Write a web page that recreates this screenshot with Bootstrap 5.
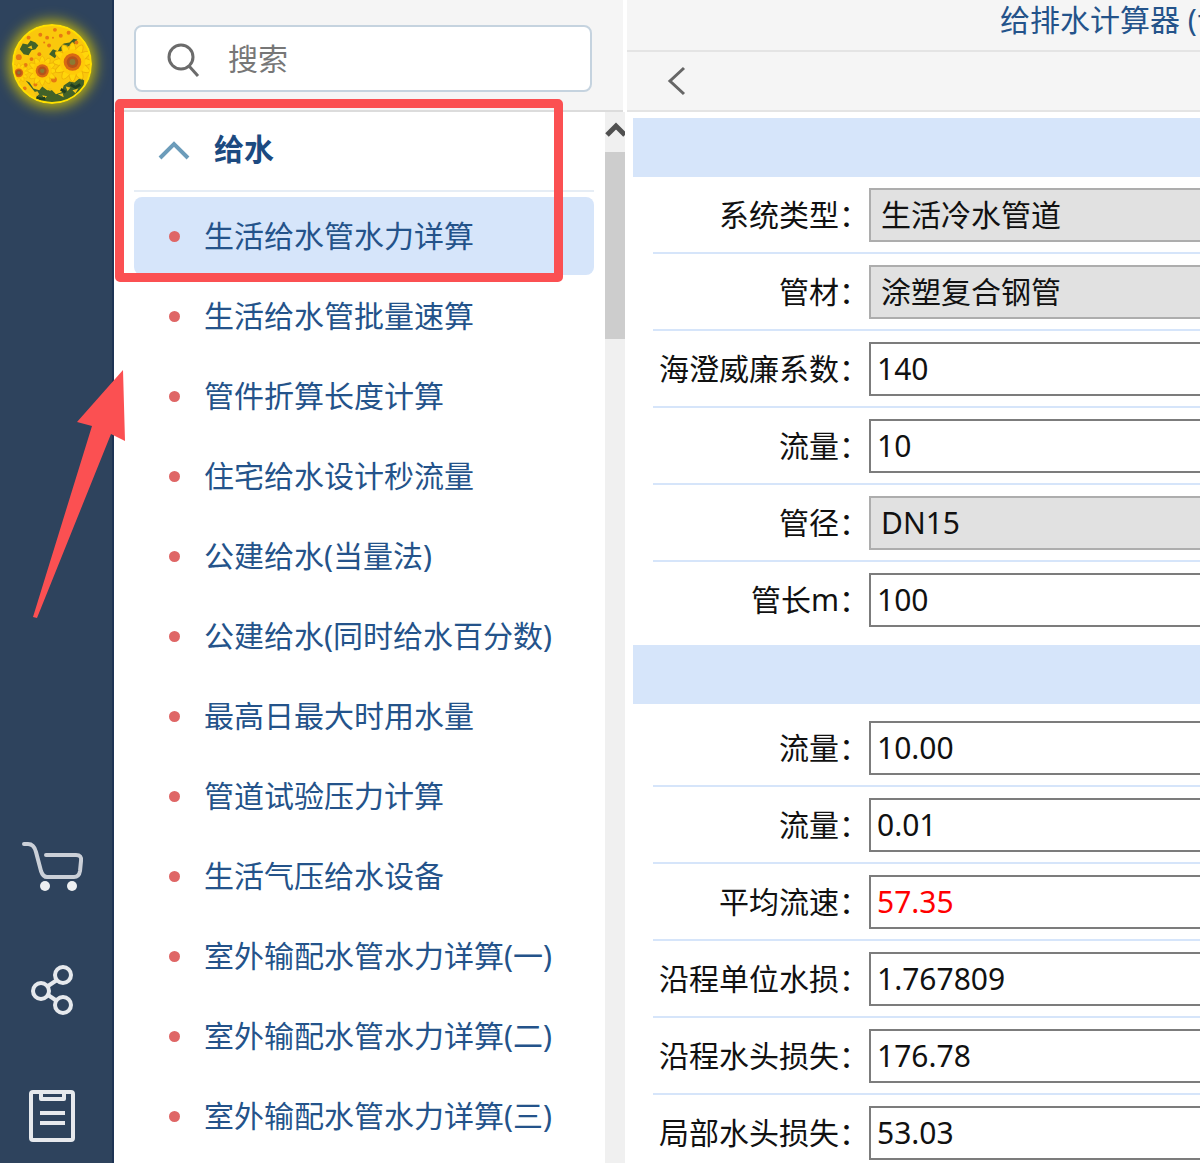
<!DOCTYPE html>
<html lang="zh-CN">
<head>
<meta charset="utf-8">
<meta name="viewport" content="width=device-width, initial-scale=1">
<title>给排水计算器</title>
<link rel="stylesheet" href="https://cdn.jsdelivr.net/npm/bootstrap@5.3.0/dist/css/bootstrap.min.css">
<style>
body{font-family:"Noto Sans","Noto Sans CJK SC",sans-serif;font-size:30px;line-height:40px;color:#111;background:#fff}
.app-shell{height:100vh}
.side-rail{width:114px;background:#2e435d;border-right:2px solid #1e3454;padding:24px 22px 18px 10px}
.avatar-btn{width:80px;height:80px;margin-left:2px;border-radius:50%;box-shadow:0 0 14px 3px #c9bb08}
.rail-btn{width:76px;height:56px}
.rail-gap{gap:70px}
.menu-pane{width:511px}
.menu-head{width:509px;height:112px;background:#f5f5f5;border-bottom:2px solid #dcdcdc;padding:25px 31px 0 20px}
.search-box{height:67px;border:2px solid #c5d3df;border-radius:8px;padding-left:28px;gap:28px}
.search-box input{font-size:30px;color:#777}
.search-box input::placeholder{color:#777;opacity:1}
.menu-body{padding:0 11px 0 20px}
.group-btn{height:80px;border-bottom:2px solid #e6edf5!important;color:#1c4a80;font-size:30px;line-height:40px;padding:0 0 4px 24px;gap:24px}
.menu-list{padding-top:5px;gap:2px}
.menu-link{height:78px;border-radius:8px;color:#24538a;padding-left:35px;gap:24px}
.menu-link.active{background:#d6e5fa}
.menu-link::before{content:"";width:11px;height:11px;border-radius:50%;background:#df6666}
.scroll-track{width:20px;background:#f0f0f0}
.scroll-up{height:40px}
.scroll-thumb{height:187px;background:#cdcdcd}
.calc-pane{margin-left:2px}
.calc-title{height:52px;background:#f5f5f5;border-bottom:2px solid #e4e4e4;padding-left:373px;color:#24538a;font-size:30px;line-height:40px}
.calc-nav{height:60px;background:#f5f5f5;border-bottom:2px solid #e4e4e4;padding-left:38px}
.calc-form{padding:6px 0 0 6px}
.section-band{height:59px;background:#d6e5fa}
.field-set{padding-left:20px}
.field-set + .section-band{margin-top:6px}
.result-set{padding-top:6px}
.field-row{height:77px;border-bottom:2px solid #d6e5fa}
.field-row:last-child{border-color:transparent}
.field-name{width:216px;text-align:right;white-space:nowrap}
.field-box{height:54px;border:2px solid #7c7c7c;padding:0 6px;margin-right:-8px;background:#fff;color:#111;border-radius:0;min-width:0}
select.field-box{appearance:none;background:#e1e1e1;border-color:#adadad;padding-left:10px}
.field-box.over-limit{color:#f00}
.mark-frame{left:115px;top:99px;width:448px;height:183px;border:9px solid #fb5052;border-radius:5px;pointer-events:none}
.mark-arrow{left:30px;top:368px;pointer-events:none}
</style>
</head>
<body>
<div class="app-shell d-flex position-relative overflow-hidden">
  <nav class="side-rail d-flex flex-column justify-content-between flex-shrink-0" aria-label="工具栏">
    <button class="avatar-btn btn p-0 border-0" aria-label="用户">
      <svg class="d-block" width="80" height="80" viewBox="0 0 82 82">
        <defs>
          <clipPath id="disc"><circle cx="41" cy="41" r="40"/></clipPath>
          <g id="flower">
            <g fill="#ffd60a" stroke="#eeb008"><ellipse rx="20" ry="5"/><ellipse rx="20" ry="5" transform="rotate(30)"/><ellipse rx="20" ry="5" transform="rotate(60)"/><ellipse rx="20" ry="5" transform="rotate(90)"/><ellipse rx="20" ry="5" transform="rotate(120)"/><ellipse rx="20" ry="5" transform="rotate(150)"/></g>
            <circle r="13" fill="#ffca08"/><circle r="9" fill="#d96813"/><circle r="6" fill="#b4541a"/><circle r="3" fill="#8c7a33"/>
          </g>
        </defs>
        <g clip-path="url(#disc)">
          <rect width="82" height="82" fill="#fac80c"/>
          <path d="M8 26l3-6 5 1 3-4 5 2 3 3-3 4-4 1-3 5-5-1zM38 31l4-5 5 2 2-4 4-4 6-1 4-4 4 1-3 5-7 2-5 4-5 3-3 5zM14 58l4 2 4 6 6 2 3-4 5 4 5 0 4 4 6-2 2-7 6-4 5 1 6-5 4 3-1 9-9 9-10 5-12 1-12-4z" fill="#426228"/>
          <path d="M22 70l4-1 2 3-3 2zM31 73l5 1-3 3zM47 72l5-1 1 4zM55 64l5 1-3 4zM62 68l6-2-3 5zM36 65l5 1-2 3zM16 24l4-2 1 4zM53 22l4 0-2 3z" fill="#efc117"/>
          <path d="M25 75l5 2 4-1M50 67l5 3M60 62l5 3 5-3" stroke="#203f20" stroke-width="3" fill="none"/>
          <g fill="#e67912"><circle cx="44" cy="6" r="2"/><circle cx="36" cy="14" r="2"/><circle cx="50" cy="12" r="2"/><circle cx="29" cy="11" r="2"/><circle cx="58" cy="9" r="2"/><circle cx="38" cy="22" r="2"/><circle cx="28" cy="31" r="2"/><circle cx="66" cy="19" r="2"/><circle cx="7" cy="34" r="3"/><circle cx="20" cy="36" r="2"/><circle cx="33" cy="19" r="1"/><circle cx="42" cy="14" r="1"/><circle cx="17" cy="14" r="2"/><circle cx="14" cy="42" r="2"/><circle cx="43" cy="57" r="3"/><circle cx="24" cy="62" r="2"/><circle cx="13" cy="66" r="2"/></g>
          <use href="#flower" transform="translate(31 48) scale(.75)"/>
          <use href="#flower" transform="translate(62 39)"/>
          <use href="#flower" transform="translate(7 50) scale(.5)"/>
        </g>
        <circle cx="41" cy="41" r="40" fill="none" stroke="#ffe000" stroke-width="2"/>
      </svg>
    </button>
    <div class="rail-gap d-flex flex-column">
      <button class="rail-btn btn p-0 border-0" aria-label="购物车">
        <svg class="d-block" width="76" height="56" viewBox="0 0 76 56" fill="none" stroke="#cbd0d8" stroke-width="4" stroke-linecap="round" stroke-linejoin="round"><path d="M14 7h4q6 0 8 8l5 19q2 6 6 6h27q5 0 6-6l1-10q1-6-5-6H36"/><g fill="#eef0f2" stroke="none"><circle cx="35" cy="49" r="5"/><circle cx="62" cy="49" r="5"/></g></svg>
      </button>
      <button class="rail-btn btn p-0 border-0" aria-label="分享">
        <svg class="d-block" width="76" height="56" viewBox="0 0 76 56" fill="none" stroke="#e6e9ed" stroke-width="4"><circle cx="31" cy="28" r="8"/><circle cx="53" cy="12" r="8"/><circle cx="53" cy="42" r="8"/><path d="M38 23l9-6M38 32l9 6"/></svg>
      </button>
      <button class="rail-btn btn p-0 border-0" aria-label="记录">
        <svg class="d-block" width="76" height="56" viewBox="0 0 76 56" fill="none" stroke="#e6e9ed" stroke-width="4" stroke-linejoin="round"><rect x="21" y="3" width="42" height="48" rx="2"/><path d="M31 3v7h23V3M30 24h25M30 34h25"/></svg>
      </button>
    </div>
  </nav>

  <aside class="menu-pane d-flex flex-column flex-shrink-0">
    <div class="menu-head flex-shrink-0">
      <div class="search-box d-flex align-items-center bg-white">
        <svg class="flex-shrink-0" width="36" height="36" viewBox="0 0 36 36" fill="none" stroke="#6b6b6b" stroke-width="3"><circle cx="17" cy="16" r="12"/><path d="M25 25l9 10"/></svg>
        <input class="form-control border-0 shadow-none bg-transparent p-0" type="search" placeholder="搜索" aria-label="搜索">
      </div>
    </div>
    <div class="d-flex flex-grow-1 overflow-hidden">
      <div class="menu-body flex-grow-1">
        <button class="group-btn btn w-100 rounded-0 border-0 d-flex align-items-center fw-bold" aria-expanded="true">
          <svg width="32" height="24" viewBox="0 0 32 24" fill="none" stroke="#6c9cba" stroke-width="4"><path d="M2 21L16 7l14 14"/></svg>
          <span>给水</span>
        </button>
        <ul class="menu-list list-unstyled d-flex flex-column mb-0 text-nowrap">
          <li><a class="menu-link active d-flex align-items-center text-decoration-none" href="#">生活给水管水力详算</a></li>
          <li><a class="menu-link d-flex align-items-center text-decoration-none" href="#">生活给水管批量速算</a></li>
          <li><a class="menu-link d-flex align-items-center text-decoration-none" href="#">管件折算长度计算</a></li>
          <li><a class="menu-link d-flex align-items-center text-decoration-none" href="#">住宅给水设计秒流量</a></li>
          <li><a class="menu-link d-flex align-items-center text-decoration-none" href="#">公建给水(当量法)</a></li>
          <li><a class="menu-link d-flex align-items-center text-decoration-none" href="#">公建给水(同时给水百分数)</a></li>
          <li><a class="menu-link d-flex align-items-center text-decoration-none" href="#">最高日最大时用水量</a></li>
          <li><a class="menu-link d-flex align-items-center text-decoration-none" href="#">管道试验压力计算</a></li>
          <li><a class="menu-link d-flex align-items-center text-decoration-none" href="#">生活气压给水设备</a></li>
          <li><a class="menu-link d-flex align-items-center text-decoration-none" href="#">室外输配水管水力详算(一)</a></li>
          <li><a class="menu-link d-flex align-items-center text-decoration-none" href="#">室外输配水管水力详算(二)</a></li>
          <li><a class="menu-link d-flex align-items-center text-decoration-none" href="#">室外输配水管水力详算(三)</a></li>
        </ul>
      </div>
      <div class="scroll-track flex-shrink-0" aria-hidden="true">
        <svg class="scroll-up d-block" width="20" height="40" viewBox="0 0 20 40" fill="none" stroke="#505050" stroke-width="5"><path d="M2 23l9-9 9 9"/></svg>
        <div class="scroll-thumb"></div>
      </div>
    </div>
  </aside>

  <main class="calc-pane flex-grow-1 overflow-hidden">
    <h1 class="calc-title mb-0 fw-normal text-nowrap overflow-hidden">给排水计算器 (专</h1>
    <div class="calc-nav d-flex align-items-center">
      <button class="btn p-0 border-0 d-flex" aria-label="返回">
        <svg width="24" height="32" viewBox="0 0 24 32" fill="none" stroke="#666" stroke-width="3"><path d="M19 3L5 16l14 13"/></svg>
      </button>
    </div>
    <form class="calc-form">
      <div class="section-band"></div>
      <div class="field-set">
        <div class="field-row d-flex align-items-center"><label class="field-name flex-shrink-0" for="f1">系统类型：</label><select class="field-box flex-grow-1" id="f1"><option>生活冷水管道</option></select></div>
        <div class="field-row d-flex align-items-center"><label class="field-name flex-shrink-0" for="f2">管材：</label><select class="field-box flex-grow-1" id="f2"><option>涂塑复合钢管</option></select></div>
        <div class="field-row d-flex align-items-center"><label class="field-name flex-shrink-0" for="f3">海澄威廉系数：</label><input class="field-box flex-grow-1" id="f3" value="140"></div>
        <div class="field-row d-flex align-items-center"><label class="field-name flex-shrink-0" for="f4">流量：</label><input class="field-box flex-grow-1" id="f4" value="10"></div>
        <div class="field-row d-flex align-items-center"><label class="field-name flex-shrink-0" for="f5">管径：</label><select class="field-box flex-grow-1" id="f5"><option>DN15</option></select></div>
        <div class="field-row d-flex align-items-center"><label class="field-name flex-shrink-0" for="f6">管长m：</label><input class="field-box flex-grow-1" id="f6" value="100"></div>
      </div>
      <div class="section-band"></div>
      <div class="field-set result-set">
        <div class="field-row d-flex align-items-center"><label class="field-name flex-shrink-0" for="r1">流量：</label><input class="field-box flex-grow-1" id="r1" value="10.00" readonly></div>
        <div class="field-row d-flex align-items-center"><label class="field-name flex-shrink-0" for="r2">流量：</label><input class="field-box flex-grow-1" id="r2" value="0.01" readonly></div>
        <div class="field-row d-flex align-items-center"><label class="field-name flex-shrink-0" for="r3">平均流速：</label><input class="field-box over-limit flex-grow-1" id="r3" value="57.35" readonly></div>
        <div class="field-row d-flex align-items-center"><label class="field-name flex-shrink-0" for="r4">沿程单位水损：</label><input class="field-box flex-grow-1" id="r4" value="1.767809" readonly></div>
        <div class="field-row d-flex align-items-center"><label class="field-name flex-shrink-0" for="r5">沿程水头损失：</label><input class="field-box flex-grow-1" id="r5" value="176.78" readonly></div>
        <div class="field-row d-flex align-items-center"><label class="field-name flex-shrink-0" for="r6">局部水头损失：</label><input class="field-box flex-grow-1" id="r6" value="53.03" readonly></div>
      </div>
    </form>
  </main>

  <div class="mark-frame position-absolute" aria-hidden="true"></div>
  <svg class="mark-arrow position-absolute" width="100" height="252" viewBox="30 368 100 252" aria-hidden="true"><path d="M123 370l2 71-14-7-74 184-4-1 59-191-15-4z" fill="#fb5052"/></svg>
</div>
<script src="https://cdn.jsdelivr.net/npm/bootstrap@5.3.0/dist/js/bootstrap.bundle.min.js"></script>
</body>
</html>
